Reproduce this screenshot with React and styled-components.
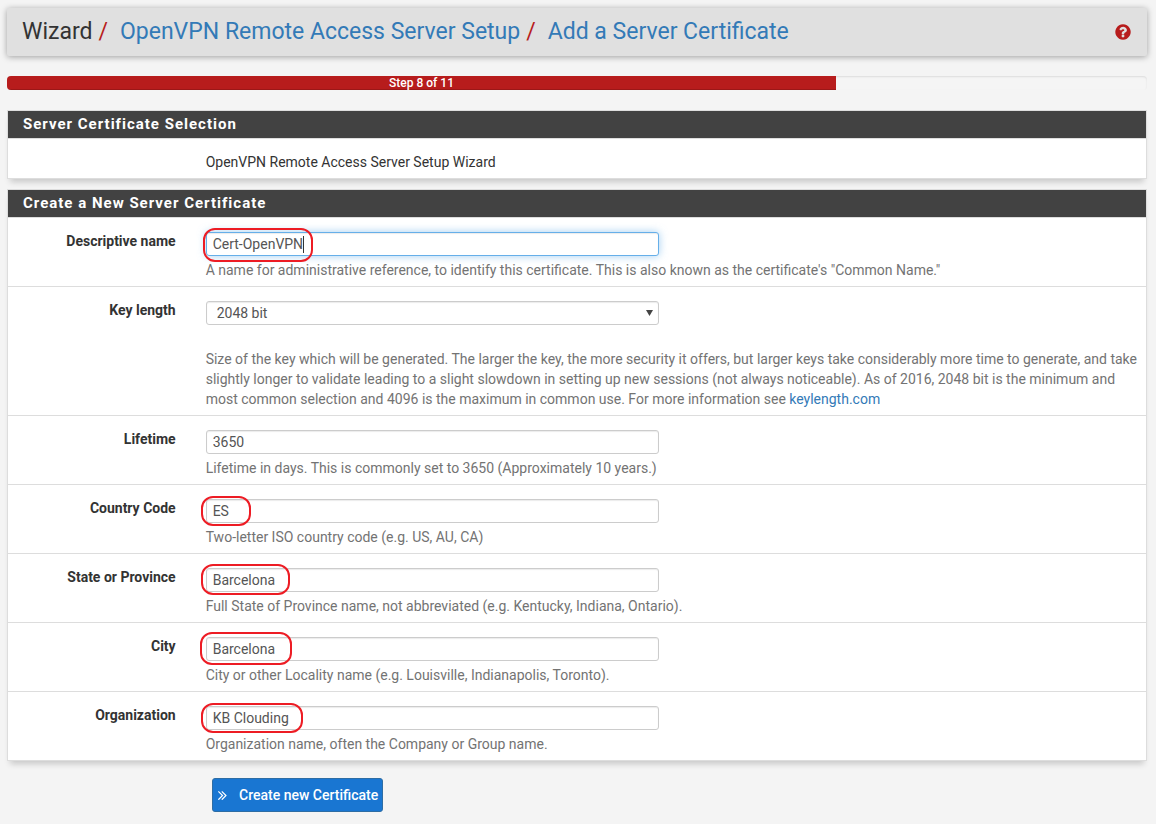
import React from 'react';
import styled, { createGlobalStyle } from 'styled-components';

const GlobalStyle = createGlobalStyle`
  *, *::before, *::after {
    box-sizing: border-box;
  }
  body {
    margin: 0;
    background: #f4f4f4;
    color: #333;
    font-family: Roboto, "Liberation Sans", Arial, sans-serif;
    font-size: 14px;
    line-height: 20px;
  }
  a {
    color: #337ab7;
    text-decoration: none;
  }
`;

const Page = styled.div`
  padding: 8px 9px 12px 7px;
`;

const Header = styled.header`
  display: flex;
  align-items: center;
  justify-content: space-between;
  height: 48px;
  padding: 0 15px;
  margin-bottom: 20px;
  background: #e0e0e0;
  border-radius: 2px;
  box-shadow: 0 1px 6px rgba(0, 0, 0, 0.35);
`;

const Breadcrumb = styled.ol`
  display: flex;
  margin: 0;
  padding: 0;
  list-style: none;
  font-size: 23px;
  line-height: 32px;
  color: #333;
`;

const Crumb = styled.li`
  & + &::before {
    content: '/';
    padding: 0 12px 0 6px;
    color: #b71c1c;
  }
`;

const HelpLink = styled.a`
  display: flex;
  color: #b71c1c;
`;

const Progress = styled.div`
  height: 14px;
  margin-bottom: 20px;
  overflow: hidden;
  background: #f5f5f5;
  border-radius: 4px;
  box-shadow: inset 0 1px 2px rgba(0, 0, 0, 0.1);
`;

const ProgressBar = styled.div`
  height: 100%;
  background: #b71c1c;
  box-shadow: inset 0 -1px 0 rgba(0, 0, 0, 0.15);
  color: #fff;
  font-size: 12px;
  font-weight: 500;
  line-height: 14px;
  text-align: center;
`;

const PanelBox = styled.section`
  margin-bottom: 10px;
  background: #fff;
  border: 1px solid #ddd;
  box-shadow: 0 6px 6px -3px rgba(0, 0, 0, 0.18);
`;

const PanelTitle = styled.h2`
  margin: 0;
  padding: 0 15px;
  background: #424242;
  border-bottom: 1px solid #ddd;
  color: #fff;
  font-size: 15px;
  font-weight: 700;
  letter-spacing: 1px;
  line-height: 27px;
`;

const Row = styled.div`
  display: grid;
  grid-template-columns: 2fr 10fr;
  padding: 13px 0 6px;
  & + & {
    border-top: 1px solid #ddd;
  }
`;

const Label = styled.label`
  padding-right: 22px;
  font-weight: 700;
  text-align: right;
`;

const Content = styled.div`
  grid-column: 2;
  padding: 0 8px;
`;

const Control = styled.div`
  position: relative;
  width: calc(50% - 13px);
  margin: 1px 0 4px;
`;

const Input = styled.input`
  display: block;
  width: 100%;
  height: 24px;
  padding: 0 6px;
  background: #fff;
  border: 1px solid ${props => (props.$active ? '#66afe9' : '#ccc')};
  border-radius: 3px;
  box-shadow: inset 0 1px 1px rgba(0, 0, 0, 0.08)${props => (props.$active ? ', 0 0 8px rgba(102, 175, 233, 0.6)' : '')};
  color: #555;
  font: inherit;
  outline: none;
`;

const Select = styled.select`
  display: block;
  width: 100%;
  height: 24px;
  padding: 0 24px 0 10px;
  appearance: none;
  background: #fff;
  border: 1px solid #ccc;
  border-radius: 3px;
  box-shadow: inset 0 1px 1px rgba(0, 0, 0, 0.08);
  color: #555;
  font: inherit;
`;

const SelectArrow = styled.svg`
  position: absolute;
  top: 9px;
  right: 6px;
  pointer-events: none;
`;

const Mark = styled.span`
  position: absolute;
  top: ${props => props.$box[1]}px;
  left: ${props => props.$box[0]}px;
  width: ${props => props.$box[2]}px;
  height: ${props => props.$box[3]}px;
  border: 2px solid #ed1c24;
  border-radius: 12px;
  pointer-events: none;
`;

const Caret = styled.span`
  position: absolute;
  top: 4px;
  left: 97px;
  width: 1px;
  height: 17px;
  background: #333;
`;

const HelpText = styled.p`
  margin: ${props => (props.$spaced ? '24px' : '0')} 0 0;
  color: #737373;
`;

const Button = styled.button`
  display: flex;
  align-items: center;
  gap: 11px;
  height: 34px;
  margin: 17px 0 0 205px;
  padding: 0 4px;
  background: #1976d2;
  border: 1px solid #2e6da4;
  border-radius: 3px;
  color: #fff;
  font: inherit;
  font-weight: 500;
`;

const fields = [
  {
    id: 'descr',
    label: 'Descriptive name',
    value: 'Cert-OpenVPN',
    active: true,
    mark: [-3, -4, 110, 34],
    help: 'A name for administrative reference, to identify this certificate. This is also known as the certificate\'s "Common Name."',
  },
  {
    id: 'keylength',
    label: 'Key length',
    options: ['2048 bit', '4096 bit'],
    help: (
      <>
        Size of the key which will be generated. The larger the key, the more security it offers, but larger keys take
        considerably more time to generate, and take slightly longer to validate leading to a slight slowdown in setting
        up new sessions (not always noticeable). As of 2016, 2048 bit is the minimum and most common selection and 4096
        is the maximum in common use. For more information see <a href="#keylength">keylength.com</a>
      </>
    ),
  },
  {
    id: 'lifetime',
    label: 'Lifetime',
    value: '3650',
    help: 'Lifetime in days. This is commonly set to 3650 (Approximately 10 years.)',
  },
  {
    id: 'country',
    label: 'Country Code',
    value: 'ES',
    mark: [-5, -3, 50, 30],
    help: 'Two-letter ISO country code (e.g. US, AU, CA)',
  },
  {
    id: 'state',
    label: 'State or Province',
    value: 'Barcelona',
    mark: [-5, -4, 89, 31],
    help: 'Full State of Province name, not abbreviated (e.g. Kentucky, Indiana, Ontario).',
  },
  {
    id: 'city',
    label: 'City',
    value: 'Barcelona',
    mark: [-6, -5, 92, 33],
    help: 'City or other Locality name (e.g. Louisville, Indianapolis, Toronto).',
  },
  {
    id: 'organization',
    label: 'Organization',
    value: 'KB Clouding',
    mark: [-5, -3, 102, 30],
    help: 'Organization name, often the Company or Group name.',
  },
];

const QuestionIcon = () => (
  <svg width="18" height="18" viewBox="0 0 1792 1792" fill="currentColor" aria-hidden="true">
    <path d="M1024 1376v-192q0-14-9-23t-23-9h-192q-14 0-23 9t-9 23v192q0 14 9 23t23 9h192q14 0 23-9t9-23zm256-672q0-88-55.5-163t-138.5-116-170-41q-243 0-371 213-15 24 8 42l132 100q7 6 19 6 16 0 25-12 53-68 86-92 34-24 86-24 48 0 85.5 26t37.5 59q0 38-20 61t-68 45q-63 28-115.5 86.5t-52.5 125.5v36q0 14 9 23t23 9h192q14 0 23-9t9-23q0-19 21.5-49.5t54.5-49.5q32-18 49-28.5t46-35 44.5-48 28-60.5 12.5-81zm384 192q0 209-103 385.5t-279.5 279.5-385.5 103-385.5-103-279.5-279.5-103-385.5 103-385.5 279.5-279.5 385.5-103 385.5 103 279.5 279.5 103 385.5z" />
  </svg>
);

const DoubleAngleIcon = () => (
  <svg width="11" height="16" viewBox="0 100 1024 1792" fill="currentColor" aria-hidden="true">
    <path d="M595 1056q0 13-10 23l-466 466q-10 10-23 10t-23-10l-50-50q-10-10-10-23t10-23l393-393-393-393q-10-10-10-23t10-23l50-50q10-10 23-10t23 10l466 466q10 10 10 23zm384 0q0 13-10 23l-466 466q-10 10-23 10t-23-10l-50-50q-10-10-10-23t10-23l393-393-393-393q-10-10-10-23t10-23l50-50q10-10 23-10t23 10l466 466q10 10 10 23z" />
  </svg>
);

const Field = ({ field }) => (
  <Row>
    <Label htmlFor={field.id}>{field.label}</Label>
    <Content>
      <Control>
        {field.options ? (
          <>
            <Select id={field.id}>
              {field.options.map(option => <option key={option}>{option}</option>)}
            </Select>
            <SelectArrow width="7" height="6" viewBox="0 0 7 6" aria-hidden="true">
              <path d="M0 0h7L3.5 6z" fill="#444" />
            </SelectArrow>
          </>
        ) : (
          <Input id={field.id} type="text" defaultValue={field.value} $active={field.active} />
        )}
        {field.active && <Caret />}
        {field.mark && <Mark $box={field.mark} />}
      </Control>
      <HelpText $spaced={Boolean(field.options)}>{field.help}</HelpText>
    </Content>
  </Row>
);

const Panel = ({ title, children }) => (
  <PanelBox>
    <PanelTitle>{title}</PanelTitle>
    {children}
  </PanelBox>
);

const step = 8;
const totalSteps = 11;

const App = () => (
  <Page>
    <GlobalStyle />
    <Header>
      <Breadcrumb>
        <Crumb>Wizard</Crumb>
        <Crumb><a href="#setup">OpenVPN Remote Access Server Setup</a></Crumb>
        <Crumb><a href="#certificate">Add a Server Certificate</a></Crumb>
      </Breadcrumb>
      <HelpLink href="#help" aria-label="Help"><QuestionIcon /></HelpLink>
    </Header>

    <Progress>
      <ProgressBar style={{ width: `${(step / totalSteps) * 100}%` }}>
        Step {step} of {totalSteps}
      </ProgressBar>
    </Progress>

    <Panel title="Server Certificate Selection">
      <Row>
        <Content>OpenVPN Remote Access Server Setup Wizard</Content>
      </Row>
    </Panel>

    <form onSubmit={e => e.preventDefault()}>
      <Panel title="Create a New Server Certificate">
        {fields.map(field => <Field key={field.id} field={field} />)}
      </Panel>
      <Button type="submit">
        <DoubleAngleIcon />
        Create new Certificate
      </Button>
    </form>
  </Page>
);

export default App;
